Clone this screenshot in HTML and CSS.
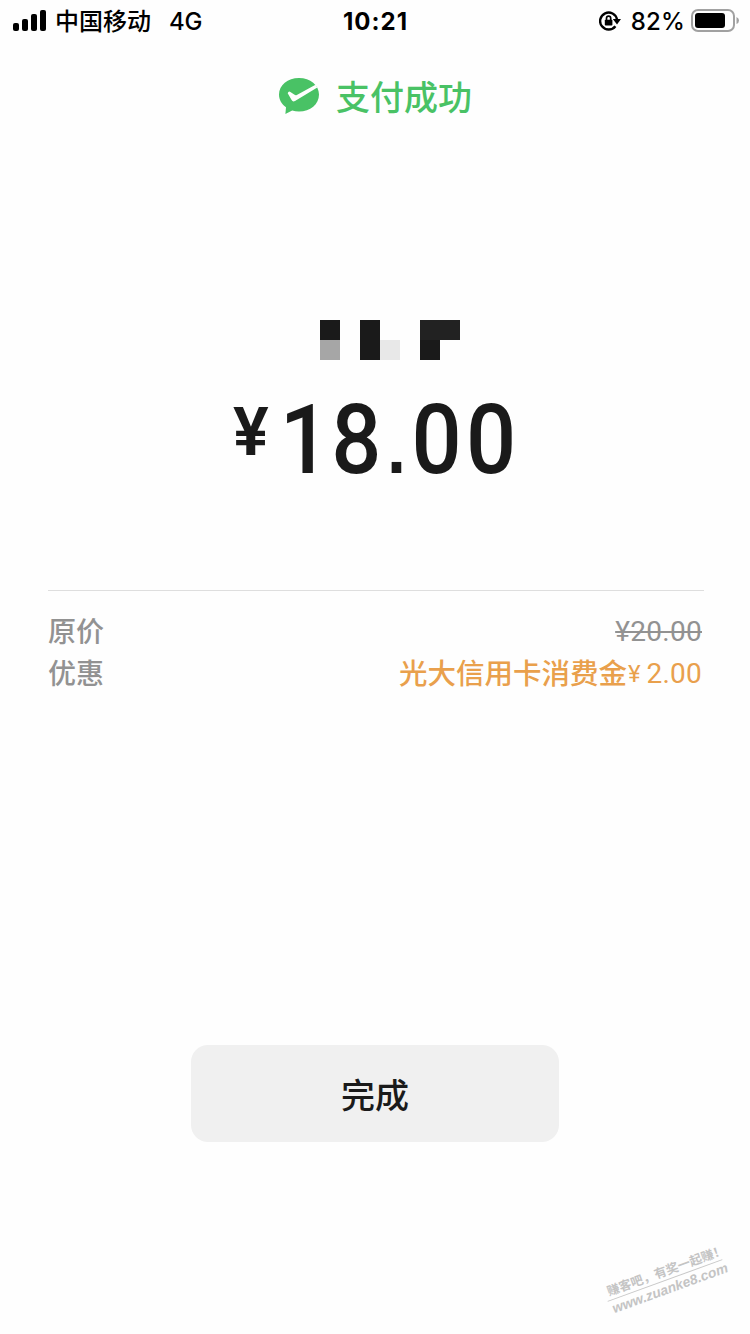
FILE: index.html
```html
<!DOCTYPE html>
<html lang="zh-CN">
<head>
<meta charset="utf-8">
<title>支付成功</title>
<link rel="stylesheet" href="styles.css">
</head>
<body>
<div class="screen">
  <header class="status">
    <div class="status-left">
      <svg class="signal" width="34" height="22" viewBox="0 0 34 22"><rect x="0" y="13" width="6" height="8" rx="2"/><rect x="9" y="9" width="6" height="12" rx="2"/><rect x="18" y="4" width="6" height="17" rx="2"/><rect x="27" y="0" width="6" height="21" rx="2"/></svg>
      <span class="carrier">中国移动</span>
      <span class="network">4G</span>
    </div>
    <span class="time">10:21</span>
    <div class="status-right">
      <svg class="lock" width="22" height="20" viewBox="0 0 22 20"><path d="M16.400 15.200A8.500 8.500 0 1 1 18 8.500" fill="none" stroke="#000" stroke-width="2.400"/><path d="M13.800 8h8.200L18 13.600z"/><rect x="5.800" y="8.700" width="7.600" height="5.900" rx=".8"/><path d="M7.500 9V7.200a2.100 2.100 0 0 1 4.200 0V9" fill="none" stroke="#000" stroke-width="1.700"/></svg>
      <span class="percent">82%</span>
      <svg class="battery" width="49" height="24" viewBox="0 0 49 24"><rect x="1" y="1" width="42" height="21" rx="6" fill="none" stroke="#a1a1a1" stroke-width="2"/><rect x="4" y="4" width="30" height="15" rx="3"/><path d="M45.500 8v7q2.500-1 2.500-3.500T45.500 8z" fill="#a1a1a1"/></svg>
    </div>
  </header>
  <div class="result">
    <svg class="logo" width="42" height="38" viewBox="0 0 42 38"><path d="M21 1C9.700 1 1 8.300 1 17.500c0 5.300 2.700 9.800 7 12.800L7.400 37l6.800-3.400c2.100.7 4.400 1 6.800 1 11.300 0 20-7.300 20-17C41 8.300 32.300 1 21 1z" fill="#49c265"/><path d="M9.700 16.200q.8-2.400 2.700-1.300l4.200 2.900q1 .6 2.200.1L37.500 7.800l1.800 2.600L17 24q-2.200 1.200-3.400-.9z" fill="#fefefe"/></svg>
    <span class="result-text">支付成功</span>
  </div>
  <svg class="payee" width="140" height="40" viewBox="0 0 140 40" shape-rendering="crispEdges"><path d="M0 0h20v20H0zM40 0h20v40H40zM100 20h20v20h-20z" fill="#1a1a1a"/><path d="M100 0h40v20h-40z" fill="#222"/><path d="M0 20h20v20H0z" fill="#a6a6a6"/><path d="M60 20h20v20H60z" fill="#e8e8e8"/></svg>
  <div class="amount"><span class="currency">¥</span><span class="value"><span class="lead">1</span>8<span class="point">.</span>00</span></div>
  <section class="details">
    <div class="row"><span class="label">原价</span><span class="original">¥20.00</span></div>
    <div class="row"><span class="label">优惠</span><span class="discount"><span class="source">光大信用卡消费金</span><span class="yen">¥</span><span class="number">2.00</span></span></div>
  </section>
  <button class="done">完成</button>
  <div class="watermark"><div class="slogan">赚客吧，有奖一起赚！</div><div class="site">www.zuanke8.com</div></div>
</div>
</body>
</html>
```
FILE: styles.css
```css
* { box-sizing: border-box; }
body { margin: 0; background: #fefefe; }
.screen {
  position: relative;
  width: 750px;
  height: 1334px;
  overflow: hidden;
  display: flex;
  flex-direction: column;
  align-items: center;
  background: #fefefe;
  color: #1a1a1a;
  font-family: Roboto, "Noto Sans CJK SC", sans-serif;
}
svg { display: block; flex: none; }
.status {
  width: 100%;
  height: 41px;
  padding: 1px 10px 0 13px;
  display: grid;
  grid-template-columns: 1fr auto 1fr;
  align-items: center;
  color: #000;
  font-family: Inter, "Noto Sans CJK SC", sans-serif;
  font-size: 24px;
  line-height: 40px;
}
.status-left, .status-right { display: flex; align-items: center; }
.status-right { justify-content: flex-end; }
.carrier { margin-left: 8px; padding-top: 1px; font-weight: 500; }
.network { margin-left: 18px; font-weight: 500; letter-spacing: -.3px; }
.time { margin-right: 2px; font-weight: 700; letter-spacing: 1px; }
.percent { margin: 0 6px 0 10px; font-weight: 500; letter-spacing: .2px; }
.signal { margin-top: -2px; }
.battery, .lock { margin-top: -1px; }
.result {
  margin-top: 36px;
  height: 40px;
  display: flex;
  align-items: center;
  gap: 16px;
  color: #49c265;
  font-size: 34px;
  font-weight: 500;
  line-height: 40px;
}
.logo { margin-top: -2px; }
.result-text { padding-top: 2px; }
.payee { margin: 203px 0 0 30px; }
.amount {
  align-self: flex-start;
  margin: 30px 0 0 233px;
  height: 100px;
  display: flex;
  align-items: flex-start;
  font-weight: 500;
}
.currency { width: 44px; font-size: 67px; font-weight: 600; line-height: 84px; }
.value {
  font-size: 97px;
  letter-spacing: 4.600px;
  line-height: 100px;
  white-space: nowrap;
  transform: scaleX(.91);
  transform-origin: left;
}
.lead { margin: 0 -3px 0 3px; }
.point { margin: 0 1.500px; font-family: "Liberation Sans", sans-serif; font-size: 75px; font-weight: 700; line-height: 1; }
.details {
  width: 656px;
  margin: 100px 0 0 2px;
  padding-top: 20px;
  border-top: 1px solid #dedede;
}
.row {
  height: 42px;
  padding-right: 2px;
  display: flex;
  justify-content: space-between;
  align-items: center;
  color: #929292;
  font-size: 28px;
  font-weight: 500;
  line-height: 42px;
}
.label, .source { padding-top: 2px; }
.original { font-weight: 400; letter-spacing: .3px; text-decoration: line-through 2px; }
.discount { display: flex; align-items: center; color: #e9a04c; }
.source { margin-right: 1px; font-size: 28.500px; }
.yen { font-size: 24px; font-weight: 400; }
.number { margin-left: 6px; font-weight: 400; letter-spacing: .2px; }
.done {
  width: 368px;
  height: 97px;
  margin-top: 350px;
  padding: 0;
  border: 0;
  border-radius: 17px;
  background: #f0f0f0;
  color: #1a1a1a;
  font: 500 34px/97px "Noto Sans CJK SC", sans-serif;
}
.watermark {
  position: absolute;
  left: 604px;
  top: 1263px;
  width: 122px;
  color: #c4c4c4;
  font-weight: 700;
  white-space: nowrap;
  transform: rotate(-20deg);
}
.slogan { height: 18px; padding-left: 3px; border-bottom: 1px solid #c8c8c8; font-size: 12.500px; line-height: 17px; }
.site { padding-left: 2px; font: italic 700 13.800px/17px "Liberation Sans", sans-serif; }
```
